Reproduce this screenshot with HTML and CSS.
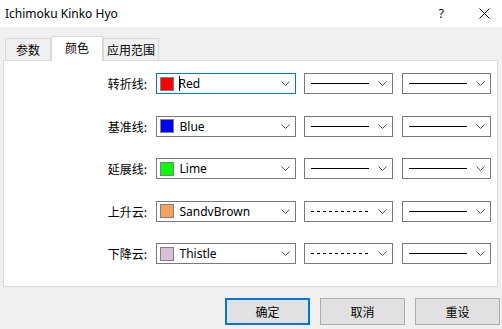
FILE: index.html
```html
<!DOCTYPE html>
<html>
<head>
<meta charset="utf-8">
<link rel="stylesheet" href="styles.css">
</head>
<body>
<div class="dialog">
  <div class="titlebar">
    <span class="title">Ichimoku Kinko Hyo</span>
    <span class="tb-btns"><span class="help">?</span><svg class="close" width="11" height="11" viewBox="0 0 11 11"><path d="M0.5 0.5 L10.5 10.5 M10.5 0.5 L0.5 10.5" stroke="#000" stroke-width="1"/></svg></span>
  </div>
  <div class="tabs">
    <div class="tab">参数</div>
    <div class="tab active">颜色</div>
    <div class="tab">应用范围</div>
  </div>
  <div class="panel">
    <div class="grid">
      <div class="label">转折线:</div>
      <div class="combo color focus"><span class="sw" style="background:#ff0000"></span><span class="caret"></span><span class="name">Red</span><svg class="chev" width="9" height="5" viewBox="0 0 9 5"><path d="M0.5 0.5 L4.5 4.5 L8.5 0.5" fill="none" stroke="#555" stroke-width="1"/></svg></div>
      <div class="combo line"><svg class="ln" width="58" height="3"><line x1="0" y1="1.5" x2="58" y2="1.5" stroke="#000" stroke-width="1"/></svg><svg class="chev" width="9" height="5" viewBox="0 0 9 5"><path d="M0.5 0.5 L4.5 4.5 L8.5 0.5" fill="none" stroke="#555" stroke-width="1"/></svg></div>
      <div class="combo line"><svg class="ln" width="58" height="3"><line x1="0" y1="1.5" x2="58" y2="1.5" stroke="#000" stroke-width="1"/></svg><svg class="chev" width="9" height="5" viewBox="0 0 9 5"><path d="M0.5 0.5 L4.5 4.5 L8.5 0.5" fill="none" stroke="#555" stroke-width="1"/></svg></div>

      <div class="label">基准线:</div>
      <div class="combo color"><span class="sw" style="background:#0000ff"></span><span class="name">Blue</span><svg class="chev" width="9" height="5" viewBox="0 0 9 5"><path d="M0.5 0.5 L4.5 4.5 L8.5 0.5" fill="none" stroke="#555" stroke-width="1"/></svg></div>
      <div class="combo line"><svg class="ln" width="58" height="3"><line x1="0" y1="1.5" x2="58" y2="1.5" stroke="#000" stroke-width="1"/></svg><svg class="chev" width="9" height="5" viewBox="0 0 9 5"><path d="M0.5 0.5 L4.5 4.5 L8.5 0.5" fill="none" stroke="#555" stroke-width="1"/></svg></div>
      <div class="combo line"><svg class="ln" width="58" height="3"><line x1="0" y1="1.5" x2="58" y2="1.5" stroke="#000" stroke-width="1"/></svg><svg class="chev" width="9" height="5" viewBox="0 0 9 5"><path d="M0.5 0.5 L4.5 4.5 L8.5 0.5" fill="none" stroke="#555" stroke-width="1"/></svg></div>

      <div class="label">延展线:</div>
      <div class="combo color"><span class="sw" style="background:#00ff00"></span><span class="name">Lime</span><svg class="chev" width="9" height="5" viewBox="0 0 9 5"><path d="M0.5 0.5 L4.5 4.5 L8.5 0.5" fill="none" stroke="#555" stroke-width="1"/></svg></div>
      <div class="combo line"><svg class="ln" width="58" height="3"><line x1="0" y1="1.5" x2="58" y2="1.5" stroke="#000" stroke-width="1"/></svg><svg class="chev" width="9" height="5" viewBox="0 0 9 5"><path d="M0.5 0.5 L4.5 4.5 L8.5 0.5" fill="none" stroke="#555" stroke-width="1"/></svg></div>
      <div class="combo line"><svg class="ln" width="58" height="3"><line x1="0" y1="1.5" x2="58" y2="1.5" stroke="#000" stroke-width="1"/></svg><svg class="chev" width="9" height="5" viewBox="0 0 9 5"><path d="M0.5 0.5 L4.5 4.5 L8.5 0.5" fill="none" stroke="#555" stroke-width="1"/></svg></div>

      <div class="label">上升云:</div>
      <div class="combo color"><span class="sw" style="background:#f4a460"></span><span class="name">SandvBrown</span><svg class="chev" width="9" height="5" viewBox="0 0 9 5"><path d="M0.5 0.5 L4.5 4.5 L8.5 0.5" fill="none" stroke="#555" stroke-width="1"/></svg></div>
      <div class="combo line"><svg class="ln" width="58" height="3"><line x1="0" y1="1.5" x2="58" y2="1.5" stroke="#000" stroke-width="1" stroke-dasharray="3 3"/></svg><svg class="chev" width="9" height="5" viewBox="0 0 9 5"><path d="M0.5 0.5 L4.5 4.5 L8.5 0.5" fill="none" stroke="#555" stroke-width="1"/></svg></div>
      <div class="combo line"><svg class="ln" width="58" height="3"><line x1="0" y1="1.5" x2="58" y2="1.5" stroke="#000" stroke-width="1"/></svg><svg class="chev" width="9" height="5" viewBox="0 0 9 5"><path d="M0.5 0.5 L4.5 4.5 L8.5 0.5" fill="none" stroke="#555" stroke-width="1"/></svg></div>

      <div class="label">下降云:</div>
      <div class="combo color"><span class="sw" style="background:#d8bfd8"></span><span class="name">Thistle</span><svg class="chev" width="9" height="5" viewBox="0 0 9 5"><path d="M0.5 0.5 L4.5 4.5 L8.5 0.5" fill="none" stroke="#555" stroke-width="1"/></svg></div>
      <div class="combo line"><svg class="ln" width="58" height="3"><line x1="0" y1="1.5" x2="58" y2="1.5" stroke="#000" stroke-width="1" stroke-dasharray="3 3"/></svg><svg class="chev" width="9" height="5" viewBox="0 0 9 5"><path d="M0.5 0.5 L4.5 4.5 L8.5 0.5" fill="none" stroke="#555" stroke-width="1"/></svg></div>
      <div class="combo line"><svg class="ln" width="58" height="3"><line x1="0" y1="1.5" x2="58" y2="1.5" stroke="#000" stroke-width="1"/></svg><svg class="chev" width="9" height="5" viewBox="0 0 9 5"><path d="M0.5 0.5 L4.5 4.5 L8.5 0.5" fill="none" stroke="#555" stroke-width="1"/></svg></div>
    </div>
  </div>
  <div class="buttons">
    <div class="btn default">确定</div>
    <div class="btn">取消</div>
    <div class="btn">重设</div>
  </div>
</div>
</body>
</html>
```
FILE: styles.css
```css
* { box-sizing: border-box; }
html, body { margin: 0; padding: 0; }
body {
  width: 502px;
  height: 329px;
  overflow: hidden;
  background: #f0f0f0;
  font-family: "Noto Sans", "Noto Sans CJK SC", sans-serif;
  font-size: 12px;
  color: #000;
}
.dialog { width: 502px; height: 329px; display: flex; flex-direction: column; }
.titlebar {
  height: 27px;
  background: #fff;
  display: flex;
  align-items: center;
  justify-content: space-between;
  padding: 0 12px 0 5px;
}
.title { font-size: 12px; line-height: 1; }
.tb-btns { display: flex; align-items: center; gap: 35px; }
.help { font-size: 12px; }
.close { display: block; }
.tabs {
  height: 33px;
  display: flex;
  align-items: flex-end;
  padding-left: 5px;
}
.tab {
  height: 22px;
  padding: 0;
  border: 1px solid #d9d9d9;
  border-bottom: none;
  background: #f0f0f0;
  display: flex;
  align-items: center;
  justify-content: center;
  font-family: "Noto Sans CJK SC", sans-serif;
  font-size: 12px;
  white-space: nowrap;
  flex: none;
}
.tab:first-child { width: 46px; }
.tab.active {
  width: 52px;
  height: 25px;
  background: #fff;
  margin-bottom: -1px;
  position: relative;
  z-index: 1;
  align-items: flex-start;
  padding-top: 2px;
}
.tab:last-child { width: 56px; }
.panel {
  margin: 0 4px 0 3px;
  height: 227px;
  background: #fff;
  border: 1px solid #d9d9d9;
  padding: 12px 0 0 0;
}
.grid {
  display: grid;
  grid-template-columns: 143px 140px 89px 89px;
  grid-auto-rows: 21px;
  column-gap: 8.5px;
  row-gap: 21.5px;
  align-items: center;
}
.label {
  text-align: right;
  font-family: "Noto Sans CJK SC", sans-serif;
  font-size: 12px;
}
.combo {
  height: 21px;
  border: 1px solid #7a7a7a;
  background: #fff;
  display: flex;
  align-items: center;
  position: relative;
}
.combo.focus { border-color: #0078d7; }
.sw {
  width: 14px;
  height: 14px;
  border: 1px solid #808080;
  margin-left: 3px;
  flex: none;
}
.caret {
  width: 1px;
  height: 15px;
  background: #000;
  margin-left: 5px;
  margin-right: -1px;
}
.name {
  margin-left: 6px;
  font-family: "Noto Sans", sans-serif;
  font-size: 12px;
  flex: 1;
}
.caret + .name { margin-left: 0; }
.chev { margin-right: 5px; flex: none; display: block; }
.line { justify-content: space-between; padding-left: 6px; }
.ln { display: block; }
.buttons {
  display: flex;
  justify-content: flex-end;
  gap: 10px;
  padding: 11px 2px 0 0;
}
.btn {
  width: 85px;
  height: 27px;
  background: #e1e1e1;
  border: 1px solid #adadad;
  display: flex;
  align-items: center;
  justify-content: center;
  font-family: "Noto Sans CJK SC", sans-serif;
  font-size: 12px;
}
.btn.default { border: 2px solid #0078d7; }
```
